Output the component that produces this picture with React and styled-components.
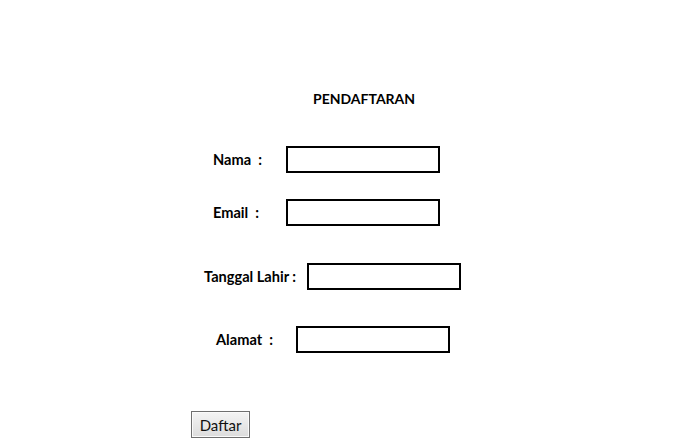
import React from "react";
import styled, { createGlobalStyle } from "styled-components";

const GlobalStyle = createGlobalStyle`
  html, body {
    margin: 0;
    padding: 0;
    background: #ffffff;
  }
  body {
    font-family: Lato, "Open Sans", "Liberation Sans", sans-serif;
    color: #000;
  }
`;

const Page = styled.div`
  width: 673px;
  height: 448px;
  box-sizing: border-box;
  padding-top: 91px;
  display: flex;
  flex-direction: column;
  overflow: hidden;
`;

const Title = styled.h1`
  margin: 0 0 0 313px;
  font-size: 14px;
  line-height: 16px;
  font-weight: 700;
`;

const Form = styled.form`
  display: flex;
  flex-direction: column;
  margin: 0;
`;

const Row = styled.div`
  display: flex;
  align-items: center;
  height: 27px;
  margin-top: ${(p) => p.$top}px;
  padding-left: ${(p) => p.$indent}px;
`;

const Label = styled.label`
  width: ${(p) => p.$width}px;
  flex-shrink: 0;
  font-size: 14.6px;
  line-height: 16px;
  font-weight: 700;
  white-space: pre;
`;

const Field = styled.input`
  box-sizing: border-box;
  width: 154px;
  height: 27px;
  border: 2px solid #000;
  border-radius: 0;
  margin: 0;
  padding: 0 4px;
  background: #fff;
  outline: none;
`;

const Button = styled.button`
  box-sizing: border-box;
  width: 59px;
  height: 27px;
  margin: 58px 0 0 191px;
  padding: 0;
  border: 1px solid #6f6f6f;
  border-radius: 0;
  background: linear-gradient(#f4f4f4, #dcdcdc);
  font-family: Lato, "Open Sans", "Liberation Sans", sans-serif;
  font-size: 15px;
  color: #111;
  box-shadow: inset 0 0 0 1px #fafafa;
`;

const fields = [
  { label: "Nama  :", indent: 213, width: 73, top: 39 },
  { label: "Email  :", indent: 213, width: 73, top: 26 },
  { label: "Tanggal Lahir :", indent: 204, width: 103, top: 37 },
  { label: "Alamat  :", indent: 216, width: 80, top: 36 },
];

export default function App() {
  return (
    <>
      <GlobalStyle />
      <Page>
        <Title>PENDAFTARAN</Title>
        <Form onSubmit={(e) => e.preventDefault()}>
          {fields.map((f) => (
            <Row key={f.label} $indent={f.indent} $top={f.top}>
              <Label $width={f.width}>{f.label}</Label>
              <Field type="text" />
            </Row>
          ))}
          <div>
            <Button type="submit">Daftar</Button>
          </div>
        </Form>
      </Page>
    </>
  );
}
